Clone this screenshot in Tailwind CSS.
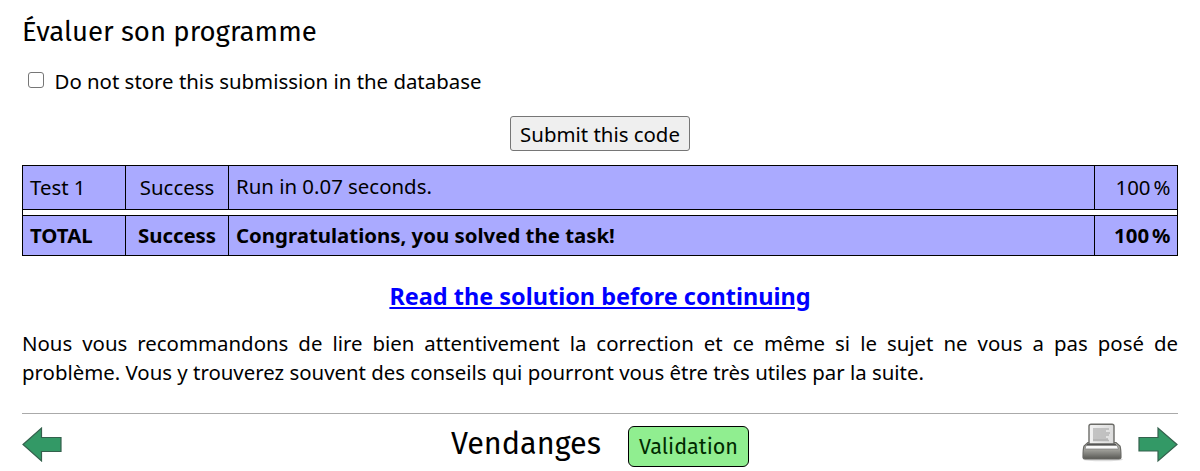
<!DOCTYPE html>
<html lang="fr"><head><meta charset="utf-8"><title>Vendanges</title>
<script src="https://cdn.jsdelivr.net/npm/@tailwindcss/browser@4"></script></head>
<body class="bg-white text-black font-['Noto_Sans',sans-serif] text-[20.4px] leading-[30px] overflow-hidden">
<main class="mx-[22px] pt-[12px]">
<h2 class="font-['Fira_Sans','Open_Sans',sans-serif] text-[27.54px] leading-[40px]">Évaluer son programme</h2>
<label class="mt-[14px] flex items-start gap-[10.5px] pl-[6px]"><span class="mt-[6px] size-4 rounded-[3px] border border-[#767676] bg-white"></span>Do not store this submission in the database</label>
<div class="mt-[20px] flex justify-center"><button class="h-[35px] w-[180px] rounded-[3px] border border-[#767676] bg-[#efefef] pt-px">Submit this code</button></div>
<section class="mt-[14px] border border-black">
<div class="grid h-[43px] grid-cols-[103px_103px_866px_82px] divide-x divide-black bg-[#aaaaff] leading-[43px]">
<div class="pl-[7px]">Test 1</div><div class="text-center">Success</div><div class="pl-[7px] leading-[41px]">Run in 0.07 seconds.</div><div class="pr-[6.5px] text-right">100<span class="inline-block w-[3px]"></span>%</div></div>
<div class="h-[7px] border-y border-black bg-white"></div>
<div class="grid h-[39px] grid-cols-[103px_103px_866px_82px] divide-x divide-black bg-[#aaaaff] font-bold leading-[39px]">
<div class="pl-[7px]">TOTAL</div><div class="text-center">Success</div><div class="pl-[7px]">Congratulations, you solved the task!</div><div class="pr-[6.5px] text-right">100<span class="inline-block w-[3px]"></span>%</div></div>
</section>
<div class="mt-[25px] text-center text-[23.46px] font-bold leading-[30px] text-[#0000ff]"><a href="#" class="underline">Read the solution before continuing</a></div>
<p class="mt-[18px] text-justify leading-[29px]">Nous vous recommandons de lire bien attentivement la correction et ce même si le sujet ne vous a pas posé de problème. Vous y trouverez souvent des conseils qui pourront vous être très utiles par la suite.</p>
<footer class="mt-[26px] flex h-[58px] items-start justify-between border-t border-[#aaaaaa] font-['Fira_Sans','Open_Sans',sans-serif]">
<svg class="mt-[12px] h-[38px] w-[96px]" viewBox="0 0 96 38"><path d="M1 18.5 19.500 2v9.500h19.500v14h-19.500V35Z" fill="#339966" stroke="#34614d" stroke-width="1.200"/></svg>
<div class="flex items-start gap-[27px]"><h1 class="mt-[10px] text-[30.6px] leading-[40px]">Vendanges</h1><span class="mt-[12px] h-[41px] w-[121px] rounded-[6px] border border-black bg-[#90ee90] text-center text-[21.6px] leading-[41px] text-[#002b00]">Validation</span></div>
<div class="mt-[9px] flex gap-[15px]">
<svg class="h-[42px] w-[41px]" viewBox="0 0 41 42">
<defs><linearGradient id="body" x1="0" y1="0" x2="0" y2="1"><stop stop-color="#b6b6b1"/><stop offset=".4" stop-color="#a5a59f"/><stop offset="1" stop-color="#585854"/></linearGradient><linearGradient id="paper"><stop stop-color="#f2f2f2"/><stop offset="1" stop-color="#dcdcdc"/></linearGradient></defs>
<ellipse cx="21" cy="36.500" rx="20" ry="1.800" fill="#ddd"/>
<path d="M6 19.500 2 23q-1 3-1 11.500 0 1.500 2 1.500h34q2 0 2-1.500 0-8.500-1-11.500l-4-3.500Z" fill="url(#body)" stroke="#696965" stroke-width="1.200"/>
<path d="M7 21V3q0-1.800 2-1.800h21q2 0 2 1.800v18Z" fill="url(#paper)" stroke="#6c6c68" stroke-width="1.400"/>
<path d="M11 6h16M11 8h13M11 10h17M11 12h16M11 14h13M11 16h15M11 17.500h16" stroke="#b5b5b5" stroke-width="1.400"/>
<path d="M4 22.500h31l1.500 3.500H3Z" fill="#fafafa" stroke="#777" stroke-width=".7"/>
<path d="M5 21.500h29" stroke="#555" stroke-width="1.200"/></svg>
<svg class="mt-[3px] h-[38px] w-[40px]" viewBox="0 0 40 38"><path d="M39 18.500 20 2v9.500H1v13.500h19V35Z" fill="#339966" stroke="#34614d" stroke-width="1.200"/></svg>
</div></footer>
</main></body></html>
